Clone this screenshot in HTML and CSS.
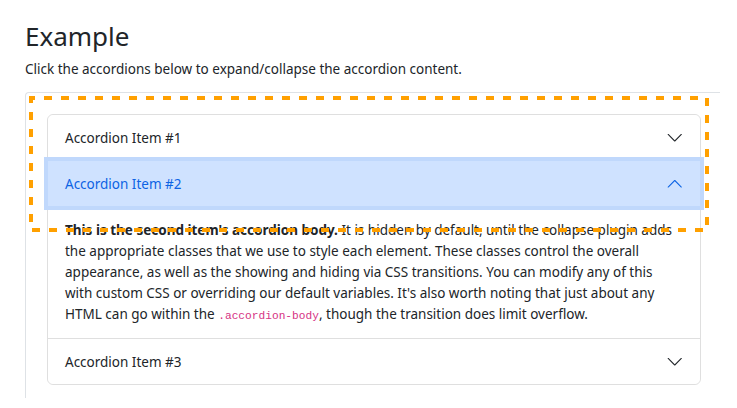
FILE: index.html
```html
<!DOCTYPE html>
<html lang="en">
<head>
    <meta charset="UTF-8">
    <meta name="viewport" content="width=device-width, initial-scale=1.0">
    <title>Accordion example</title>
    <link rel="stylesheet" href="styles.css">
</head>
<body>
    <main class="page">
        <h2 class="titulo">Example</h2>
        <p class="subtitulo">Click the accordions below to expand/collapse the accordion content.</p>

        <div class="demo">
            <!-- marco naranja encima del ejemplo -->
            <svg class="resaltado" viewBox="0 0 680 136">
                <rect x="2" y="2" width="676" height="132" fill="none" stroke="#ffa000" stroke-width="4" stroke-dasharray="8 9" stroke-dashoffset="4"/>
            </svg>

            <div class="accordion">
                <div class="accordion-item">
                    <button class="accordion-button">
                        <span>Accordion Item #1</span>
                        <svg class="chevron" viewBox="0 0 16 16"><path fill-rule="evenodd" d="M1.646 4.646a.5.5 0 0 1 .708 0L8 10.293l5.646-5.647a.5.5 0 0 1 .708.708l-6 6a.5.5 0 0 1-.708 0l-6-6a.5.5 0 0 1 0-.708z"/></svg>
                    </button>
                </div>

                <div class="accordion-item">
                    <button class="accordion-button abierto">
                        <span>Accordion Item #2</span>
                        <svg class="chevron" viewBox="0 0 16 16"><path fill-rule="evenodd" d="M1.646 4.646a.5.5 0 0 1 .708 0L8 10.293l5.646-5.647a.5.5 0 0 1 .708.708l-6 6a.5.5 0 0 1-.708 0l-6-6a.5.5 0 0 1 0-.708z"/></svg>
                    </button>
                    <div class="accordion-body">
                        <strong>This is the second item's accordion body.</strong> It is hidden by default, until the collapse plugin adds the appropriate classes that we use to style each element. These classes control the overall appearance, as well as the showing and hiding via CSS transitions. You can modify any of this with custom CSS or overriding our default variables. It's also worth noting that just about any HTML can go within the <code>.accordion-body</code>, though the transition does limit overflow.
                    </div>
                </div>

                <div class="accordion-item">
                    <button class="accordion-button">
                        <span>Accordion Item #3</span>
                        <svg class="chevron" viewBox="0 0 16 16"><path fill-rule="evenodd" d="M1.646 4.646a.5.5 0 0 1 .708 0L8 10.293l5.646-5.647a.5.5 0 0 1 .708.708l-6 6a.5.5 0 0 1-.708 0l-6-6a.5.5 0 0 1 0-.708z"/></svg>
                    </button>
                </div>
            </div>
        </div>
    </main>
</body>
</html>
```

FILE: styles.css
```css
body {
    margin: 0;
    background-color: #fff;
    color: #212529;
    font-family: "Noto Sans", sans-serif;
}

.page {
    padding: 18px 0 0 25px;
}

.titulo {
    margin: 0;
    font-size: 26px;
    font-weight: 400;
    line-height: 36px;
}

.subtitulo {
    margin: 5px 0 12px;
    font-size: 13.5px;
    line-height: 21px;
}

.demo {
    position: relative;
    width: 695px;
    box-sizing: border-box;
    padding: 21px 19px 13px 21px;
    border-top: 1px solid #dee2e6;
    border-left: 1px solid #dee2e6;
    border-top-left-radius: 4px;
}

.resaltado {
    position: absolute;
    left: 3px;
    top: 3px;
    width: 680px;
    height: 136px;
    z-index: 5;
    pointer-events: none;
}

.accordion {
    border: 1px solid #dfdfdf;
    border-radius: 6px;
}

.accordion-item + .accordion-item {
    border-top: 1px solid #dfdfdf;
}

.accordion-button {
    display: flex;
    align-items: center;
    justify-content: space-between;
    width: 100%;
    height: 45px;
    padding: 0 17px;
    border: 0;
    border-radius: 6px;
    background-color: #fff;
    color: #212529;
    font-family: inherit;
    font-size: 13.5px;
    text-align: left;
}

.accordion-button.abierto {
    position: relative;
    z-index: 2;
    border-radius: 0;
    background-color: #cfe2ff;
    color: #0c63e4;
    box-shadow: 0 0 0 4px #c0d8fc;
}

.chevron {
    width: 17.5px;
    height: 17.5px;
    fill: currentColor;
}

.abierto .chevron {
    transform: rotate(-180deg);
}

.accordion-body {
    padding: 14px 17px 13px;
    font-size: 13.5px;
    line-height: 21px;
}

.accordion-body code {
    font-family: "Liberation Mono", monospace;
    font-size: 11.2px;
    line-height: 1;
    color: #d63384;
}
```
